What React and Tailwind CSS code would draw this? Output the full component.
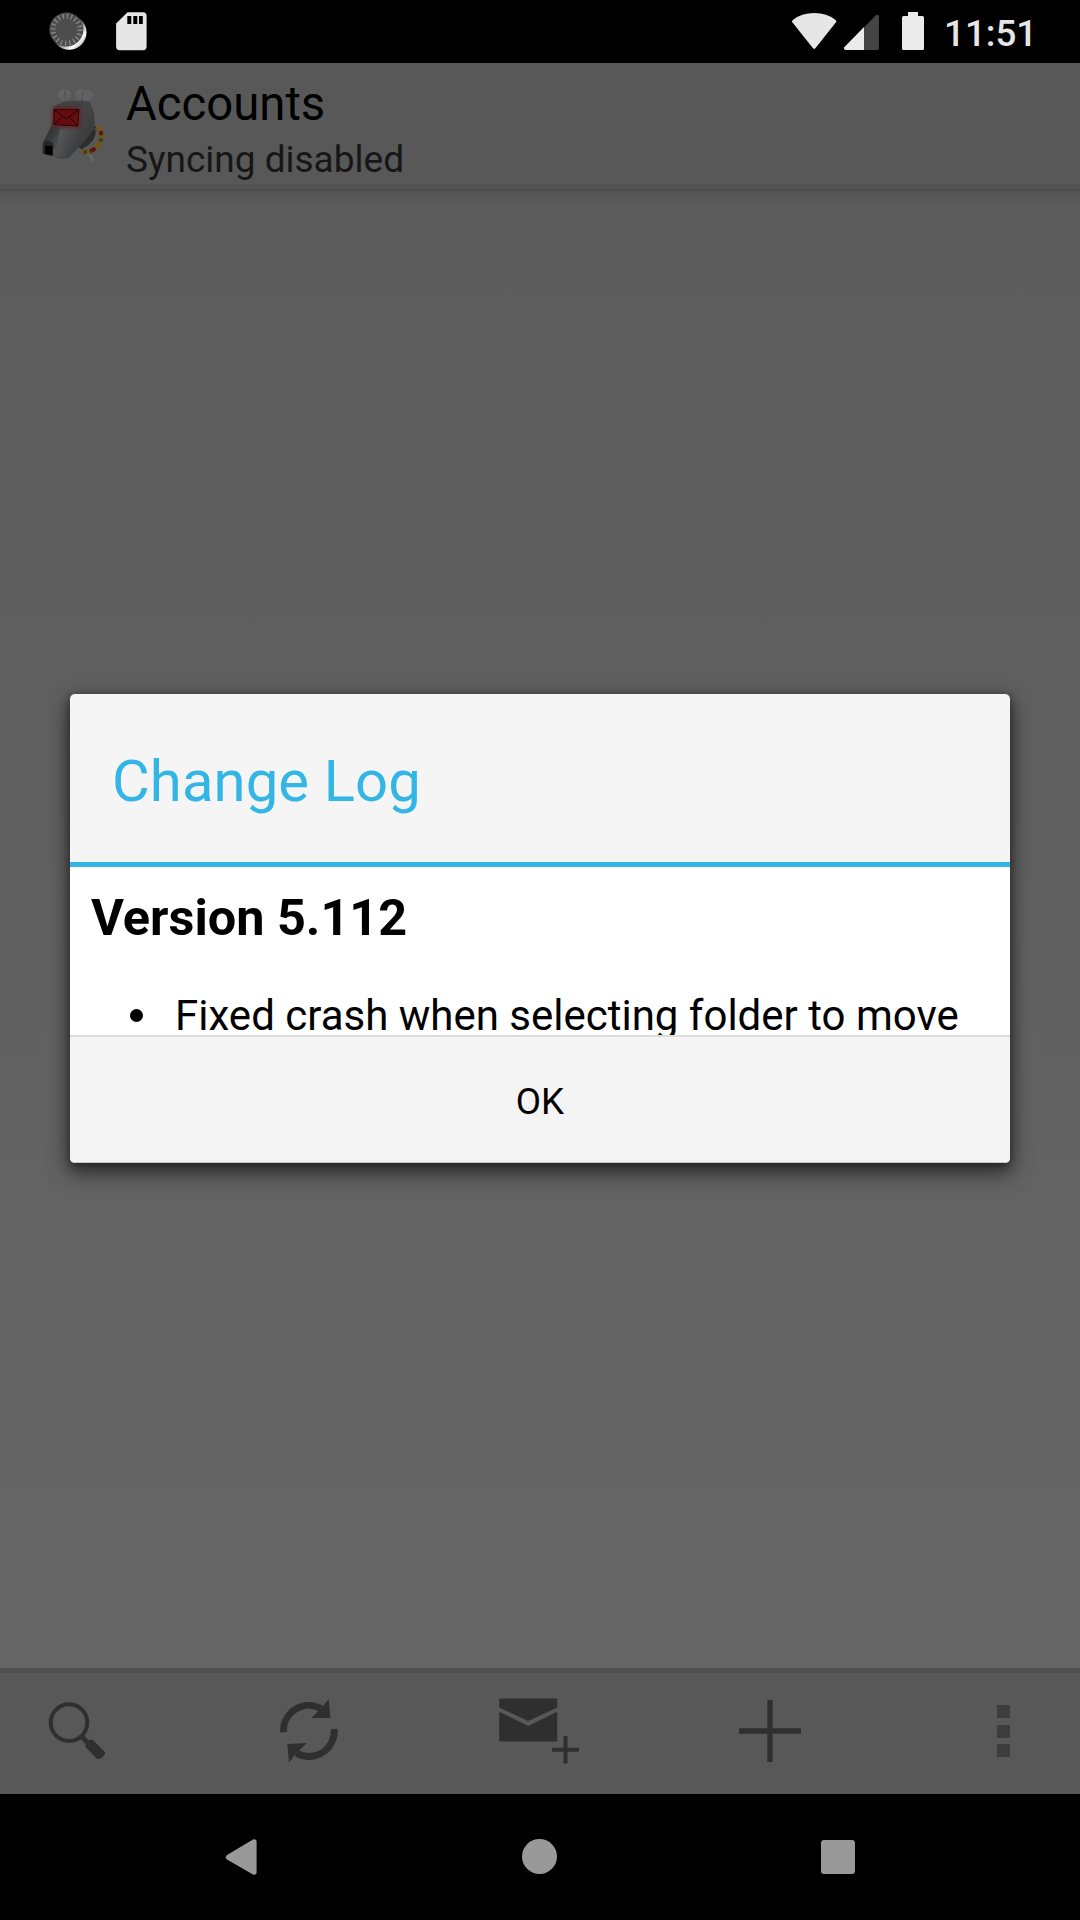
import React from "react";

function StatusBar() {
  return (
    <div className="flex h-[63px] items-start justify-between bg-black">
      <div className="flex">
        <svg className="ml-[46px] h-[63px] w-[44px]" viewBox="46 0 44 63">
          <defs>
            <linearGradient id="rim" x1="0" y1="0" x2="1" y2="1">
              <stop offset="0.45" stopColor="#444" />
              <stop offset="0.75" stopColor="#fff" />
              <stop offset="1" stopColor="#777" />
            </linearGradient>
          </defs>
          <circle cx="69.2" cy="32.4" r="17.3" fill="url(#rim)" />
          <circle cx="66.4" cy="29.6" r="17" fill="#4d4d4d" />
          <circle cx="66.4" cy="29.6" r="13.5" fill="none" stroke="#8c8c8c" strokeWidth="5" strokeDasharray="1.2 3.041" />
        </svg>
        <svg className="ml-[25px] h-[63px] w-[34px]" viewBox="115 0 34 63">
          <path
            fill="#e6e6e6"
            fillRule="evenodd"
            d="M127.5 12.2H143a3.6 3.6 0 0 1 3.6 3.6V46.600a3.600 3.600 0 0 1-3.600 3.600H119.700a3.600 3.600 0 0 1-3.600-3.600V23.500ZM127.300 16v8h4v-8ZM133.300 16v8h4v-8ZM139 16v8h3.800v-8Z"
          />
        </svg>
      </div>
      <div className="flex">
        <svg className="h-[63px] w-[140px]" viewBox="787 0 140 63">
          <path
            fill="#e6e6e6"
            d="M792.300 22.300Q791.300 21 792.800 19.900Q801.500 13 814.200 13Q827 13 835.600 19.900Q837 21 836 22.300L815.600 48Q814.200 49.700 812.800 48Z"
          />
          <path fill="#ebebeb" d="M864 27V50H845.800Q844 50 844 48.200V47.500Z" />
          <path fill="#444" d="M864 27.500L875.600 15.500Q876.500 14.700 877.500 14.700Q879 14.700 879 16.300V48.200Q879 50 877.200 50H864Z" />
          <path
            fill="#ebebeb"
            d="M908 12H918V16H922.500Q924 16 924 17.500V48.500Q924 50 922.500 50H903.500Q902 50 902 48.500V17.500Q902 16 903.500 16H908Z"
          />
        </svg>
        <div className="mr-[41px] ml-[17px] w-[95px] pt-[12px] text-[36.75px] leading-[43px] font-medium whitespace-nowrap text-[#e6e6e6]">
          11:51
        </div>
      </div>
    </div>
  );
}

function AppIcon() {
  return (
    <svg className="h-[121px] w-[90px]" viewBox="30 63 90 121">
      <defs>
        <linearGradient id="head" x1="0" y1="0" x2="1" y2="0.6">
          <stop offset="0" stopColor="#333334" />
          <stop offset="0.5" stopColor="#494a4c" />
          <stop offset="1" stopColor="#38393b" />
        </linearGradient>
        <linearGradient id="snout" x1="0" y1="0" x2="1" y2="1">
          <stop offset="0" stopColor="#2a2b2c" />
          <stop offset="0.5" stopColor="#3b3c3e" />
          <stop offset="1" stopColor="#606164" />
        </linearGradient>
        <linearGradient id="jaw" x1="0" y1="0" x2="1" y2="0.5">
          <stop offset="0" stopColor="#5c5d60" />
          <stop offset="1" stopColor="#3c3d3f" />
        </linearGradient>
        <filter id="glow" x="-30%" y="-30%" width="160%" height="160%">
          <feGaussianBlur stdDeviation="2.200" />
        </filter>
      </defs>
      <g fill="#636363">
        <ellipse cx="64.400" cy="95" rx="6.600" ry="6" />
        <ellipse cx="81" cy="94.500" rx="6" ry="5.500" />
        <ellipse cx="87" cy="95.500" rx="6" ry="5.500" />
      </g>
      <path d="M64.500 91L66 103M83 91L81 104" stroke="#4a4a4a" strokeWidth="0.800" fill="none" />
      <path d="M85 154L92 155L94.500 160L92.500 163.500Q90 157 85 154Z" fill="#666" />
      <path d="M93 126L97 127Q99 140 83 150L78 147Z" fill="#2c2d2f" />
      <path d="M96 128Q99 141 82.500 149.500" stroke="#6a6a6a" strokeWidth="1" fill="none" />
      <path d="M97.500 126Q104.500 134 98.500 144.500Q93 153 81.500 152" stroke="#74551b" strokeWidth="4.600" fill="none" />
      <g fill="none" strokeWidth="4">
        <path d="M100.500 131L101.500 135M95.500 148.500L90 151.500" stroke="#551718" />
        <path d="M101.300 138.500L100.500 141.500M86.500 152.300L84 152.300" stroke="#27452b" />
      </g>
      <path d="M53.500 107L62 102.500Q74 100 90 102L94 113L95 128L83 143L69 157.500Q62 160.500 52 156L42 153L43 144L52 123Z" fill="url(#head)" />
      <path d="M62 102.500Q75 100 90 102L80 108H54Z" fill="#414244" />
      <path d="M53 124L60 129L55 157L42.500 153V143Z" fill="url(#snout)" />
      <path d="M60 129L80 127L66 158L55 157Z" fill="url(#jaw)" />
      <path d="M43.500 143Q48 138 53.500 144L52.500 156L43.500 154Z" fill="#262626" />
      <path d="M45 145.500L52.500 146V155.500L45 154Z" fill="#000" />
      <path d="M53 108H80V127L53 126Z" fill="#8b1012" filter="url(#glow)" opacity="0.800" />
      <path d="M53.500 109H79.500L78 126.500L53.500 125Z" fill="#690a0c" stroke="#833" strokeWidth="0.700" />
      <path d="M54 109.500L66 119L79 109.500M54 124.500L62.500 116.500M78 126L69.500 117.500M54 109.300H79L78 126L54 124.700Z" fill="none" stroke="#180a0a" strokeWidth="1" />
    </svg>
  );
}

function Header() {
  return (
    <header className="flex h-[121px] bg-[#585858]">
      <div className="ml-[30px]">
        <AppIcon />
      </div>
      <div className="ml-[6px] pt-[12.500px]">
        <div className="text-[47.25px] leading-[56px] text-black">Accounts</div>
        <div className="mt-[6.500px] text-[37px] leading-[43px] text-[#161616]">Syncing disabled</div>
      </div>
    </header>
  );
}

function ChangeLogDialog() {
  return (
    <section className="flex h-[469px] w-[940px] flex-col overflow-hidden rounded-[5px] bg-[#f5f5f5] shadow-[0_8px_20px_2px_rgba(0,0,0,0.55),0_2px_8px_rgba(0,0,0,0.35)]">
      <h1 className="h-[168px] pt-[53px] pl-[42px] text-[58px] leading-[68px] tracking-[0.1px] text-[#33b5e5]">Change Log</h1>
      <div className="h-[5px] bg-[#33b5e5]" />
      <div className="h-[168px] overflow-hidden bg-white px-[21px] text-black">
        <h2 className="pt-[21px] text-[50.4px] leading-[60px] font-bold whitespace-nowrap">Version 5.112</h2>
        <div className="mt-[43px] flex h-[50px] text-[42px] leading-[50px] whitespace-nowrap">
          <span className="mt-[17.500px] ml-[39px] h-[13px] w-[13px] rounded-full bg-black" />
          <span className="ml-[32px]">Fixed crash when selecting folder to move</span>
        </div>
      </div>
      <button className="h-[128px] border-t-2 border-b border-t-[#dcdcdc] border-b-[#c4c6c6] bg-[#f4f4f4] pt-[4px] text-center text-[36.75px] leading-[43px] text-black">OK</button>
    </section>
  );
}

function BottomBar() {
  return (
    <div className="flex h-[126px] border-t-[5px] border-[#4f4f4f] bg-[#585858] text-[#2f2f2f]">
      <svg className="ml-[40px] h-[121px] w-[80px]" viewBox="40 1673 80 121">
        <circle cx="69" cy="1722.600" r="18.300" fill="none" stroke="currentColor" strokeWidth="4" />
        <path d="M81 1736L88 1743" stroke="currentColor" strokeWidth="5" />
        <path d="M85.500 1744Q86 1740 91 1739.500L93 1740L104.500 1751.500Q106 1753 104.500 1755Q102 1758.500 99 1759Q97.500 1759.300 96 1758L85.500 1747Z" fill="currentColor" />
      </svg>
      <svg className="ml-[148px] h-[121px] w-[80px]" viewBox="268 1673 80 121">
        <path d="M283.500 1732.300A25.300 25.300 0 0 1 321 1708.500M334.200 1729A25.300 25.300 0 0 1 296.500 1753.200" fill="none" stroke="currentColor" strokeWidth="6.800" />
        <path d="M328.700 1699L330.500 1718H311L321 1708.500ZM289 1762.500L287.300 1744L307 1743L296.500 1753Z" fill="currentColor" />
      </svg>
      <svg className="ml-[146px] h-[121px] w-[90px]" viewBox="494 1673 90 121">
        <path d="M499.200 1698.500H557.200V1707.500L528.200 1721L499.200 1707.500ZM499.200 1711.700L528.200 1726L557.200 1711.700V1741.500H499.200Z" fill="currentColor" />
        <path d="M565.500 1736V1763.500M552 1749.800H579" stroke="currentColor" strokeWidth="4" />
      </svg>
      <svg className="ml-[146px] h-[121px] w-[80px]" viewBox="730 1673 80 121">
        <path d="M770 1700V1762M739 1731H801" stroke="currentColor" strokeWidth="5.300" />
      </svg>
      <div className="mr-[70px] ml-auto flex flex-col gap-[6.500px] pt-[32px]">
        <div className="h-[13px] w-[13px] bg-[#3d3d3d]" />
        <div className="h-[13px] w-[13px] bg-[#3d3d3d]" />
        <div className="h-[13px] w-[13px] bg-[#3d3d3d]" />
      </div>
    </div>
  );
}

function NavBar() {
  return (
    <div className="flex h-[126px] bg-black pl-[225px]">
      <svg className="h-[126px] w-[32px]" viewBox="225 1794 32 126">
        <path d="M253 1839.500Q256.600 1838.500 256.600 1842V1872Q256.600 1875.500 253 1874.500L227 1859.500Q224.400 1857.300 227 1855Z" fill="#999" />
      </svg>
      <div className="mt-[45px] ml-[265px] h-[35px] w-[35px] rounded-full bg-[#999]" />
      <div className="mt-[46px] ml-[264px] h-[34px] w-[34px] rounded-[3px] bg-[#999]" />
    </div>
  );
}

export default function App() {
  return (
    <div className="flex h-[1920px] w-[1080px] flex-col overflow-hidden bg-black font-['Roboto',sans-serif]">
      <StatusBar />
      <div className="relative flex h-[1731px] flex-col bg-linear-to-b from-[#5c5c5c] to-[#666]">
        <Header />
        <div className="h-[5px] bg-[#535353]" />
        <div className="h-[2px] bg-[#4e4e4e]" />
        <div className="h-[18px] bg-linear-to-b from-[#535353] to-[#5d5d5d]" />
        <main className="flex-1" />
        <BottomBar />
        <div className="absolute inset-0 flex items-center justify-center">
          <ChangeLogDialog />
        </div>
      </div>
      <NavBar />
    </div>
  );
}
